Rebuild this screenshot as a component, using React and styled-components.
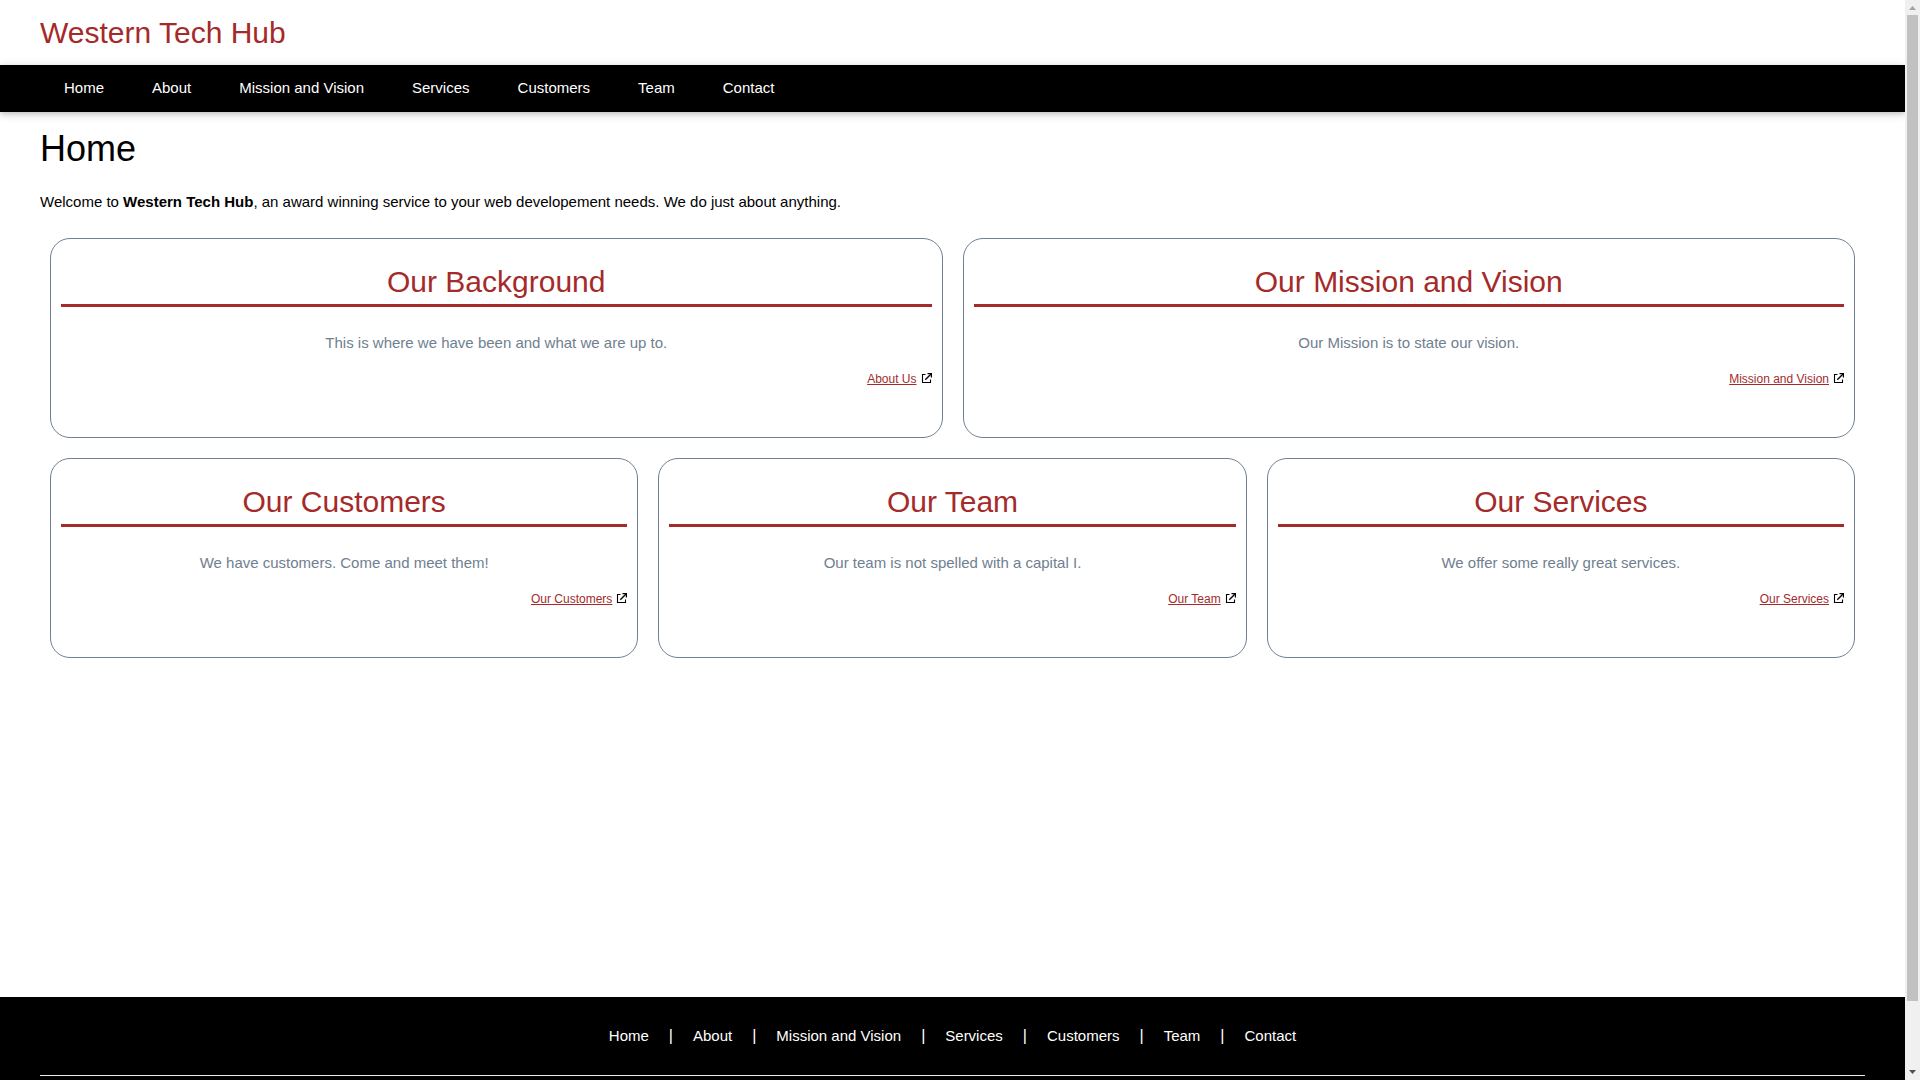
import React from "react";
import styled, { createGlobalStyle } from "styled-components";

const GlobalStyle = createGlobalStyle`
  *, *::before, *::after { box-sizing: border-box; }
  body {
    margin: 0;
    background: #fff;
    color: #000;
    font: 15px/22px "Liberation Sans", Arial, sans-serif;
  }
`;

const Shell = styled.div`
  display: flex;
  height: 100vh;
`;

const Page = styled.div`
  flex: 1;
  min-width: 0;
  display: flex;
  flex-direction: column;
  overflow: hidden;
`;

const Header = styled.header`
  padding: 10px 40px;
  color: #a52a2a;
  font-size: 30px;
  line-height: 45px;
`;

const Nav = styled.nav`
  display: flex;
  padding: 0 40px;
  background: #000;
  box-shadow: 0 2px 5px 0 rgba(0, 0, 0, 0.16), 0 2px 10px 0 rgba(0, 0, 0, 0.12);
`;

const NavLink = styled.a`
  padding: 12px 24px 13px;
  color: #fff;
  text-decoration: none;
`;

const Main = styled.main`
  flex: 1;
  padding: 10px 40px;
`;

const Title = styled.h1`
  margin: 0 0 15px;
  font-size: 36px;
  font-weight: 400;
  line-height: 54px;
`;

const Intro = styled.p`
  margin: 0 0 15px;
`;

const Cards = styled.div`
  display: flex;
  flex-direction: column;
  gap: 20px;
  padding: 10px;
`;

const CardRow = styled.div`
  display: flex;
  gap: 20px;
`;

const Card = styled.section`
  flex: 1;
  min-height: 200px;
  padding: 20px 10px;
  border: 1px solid #708090;
  border-radius: 20px;
`;

const CardTitle = styled.h2`
  margin: 0 0 25px;
  border-bottom: 3px solid #a52a2a;
  color: #a52a2a;
  font-size: 30px;
  font-weight: 400;
  line-height: 45px;
  text-align: center;
`;

const CardText = styled.p`
  margin: 0 0 16px;
  color: #708090;
  text-align: center;
`;

const CardFooter = styled.div`
  display: flex;
  justify-content: flex-end;
  gap: 4px;
  font-size: 12px;
  line-height: 18px;
`;

const CardLink = styled.a`
  color: #a52a2a;
`;

const LinkIcon = styled.svg`
  width: 11px;
  height: 11px;
  margin-top: 3px;
`;

const Footer = styled.footer`
  padding: 28px 40px 4px;
  background: #000;
  color: #fff;
`;

const FooterNav = styled.nav`
  display: flex;
  justify-content: center;
  gap: 20px;
`;

const FooterLink = styled.a`
  color: #fff;
  text-decoration: none;
`;

const Separator = styled.span`
  font-size: 16px;
`;

const Rule = styled.hr`
  margin: 28px 0 0;
  border: 0;
  border-top: 1px solid #eee;
`;

const ScrollTrack = styled.div`
  display: flex;
  flex-direction: column;
  width: 15px;
  background: #f0f0f0;
`;

const ScrollArrow = styled.svg`
  width: 15px;
  height: 15px;
  fill: ${(p) => (p.$active ? "#505050" : "#a3a3a3")};
`;

const ScrollRail = styled.div`
  flex: 1;
  padding: 0 2px;
`;

const ScrollThumb = styled.div`
  height: 93.9%;
  background: #c1c1c1;
`;

const links = [
  ["Home", "#home"],
  ["About", "#about"],
  ["Mission and Vision", "#mission"],
  ["Services", "#services"],
  ["Customers", "#customers"],
  ["Team", "#team"],
  ["Contact", "#contact"],
];

const rows = [
  [
    { title: "Our Background", text: "This is where we have been and what we are up to.", link: "About Us", href: "#about" },
    { title: "Our Mission and Vision", text: "Our Mission is to state our vision.", link: "Mission and Vision", href: "#mission" },
  ],
  [
    { title: "Our Customers", text: "We have customers. Come and meet them!", link: "Our Customers", href: "#customers" },
    { title: "Our Team", text: "Our team is not spelled with a capital I.", link: "Our Team", href: "#team" },
    { title: "Our Services", text: "We offer some really great services.", link: "Our Services", href: "#services" },
  ],
];

function ExternalIcon() {
  return (
    <LinkIcon viewBox="0 0 11 11" fill="none" stroke="#000" aria-hidden="true">
      <path d="M4.500 1.500H1.500V9.500H9.500V6.500" strokeWidth="1.1" />
      <path d="M4.300 6.700L10 1" strokeWidth="1.3" />
      <path d="M6.500 0.600H10.400V4.500" strokeWidth="1.2" />
    </LinkIcon>
  );
}

export default function App() {
  return (
    <Shell>
      <GlobalStyle />
      <Page>
        <Header>Western Tech Hub</Header>
        <Nav>
          {links.map(([label, href]) => (
            <NavLink key={label} href={href}>{label}</NavLink>
          ))}
        </Nav>
        <Main>
          <Title>Home</Title>
          <Intro>
            Welcome to <b>Western Tech Hub</b>, an award winning service to your web developement needs. We do just
            about anything.
          </Intro>
          <Cards>
            {rows.map((row) => (
              <CardRow key={row[0].title}>
                {row.map((card) => (
                  <Card key={card.title}>
                    <CardTitle>{card.title}</CardTitle>
                    <CardText>{card.text}</CardText>
                    <CardFooter>
                      <CardLink href={card.href}>{card.link}</CardLink>
                      <ExternalIcon />
                    </CardFooter>
                  </Card>
                ))}
              </CardRow>
            ))}
          </Cards>
        </Main>
        <Footer>
          <FooterNav>
            {links.map(([label, href], i) => (
              <React.Fragment key={label}>
                {i > 0 && <Separator>|</Separator>}
                <FooterLink href={href}>{label}</FooterLink>
              </React.Fragment>
            ))}
          </FooterNav>
          <Rule />
        </Footer>
      </Page>
      <ScrollTrack aria-hidden="true">
        <ScrollArrow viewBox="0 0 15 15"><path d="M4 10L7.500 6L11 10Z" /></ScrollArrow>
        <ScrollRail><ScrollThumb /></ScrollRail>
        <ScrollArrow $active viewBox="0 0 15 15"><path d="M4 5L7.500 9L11 5Z" /></ScrollArrow>
      </ScrollTrack>
    </Shell>
  );
}
